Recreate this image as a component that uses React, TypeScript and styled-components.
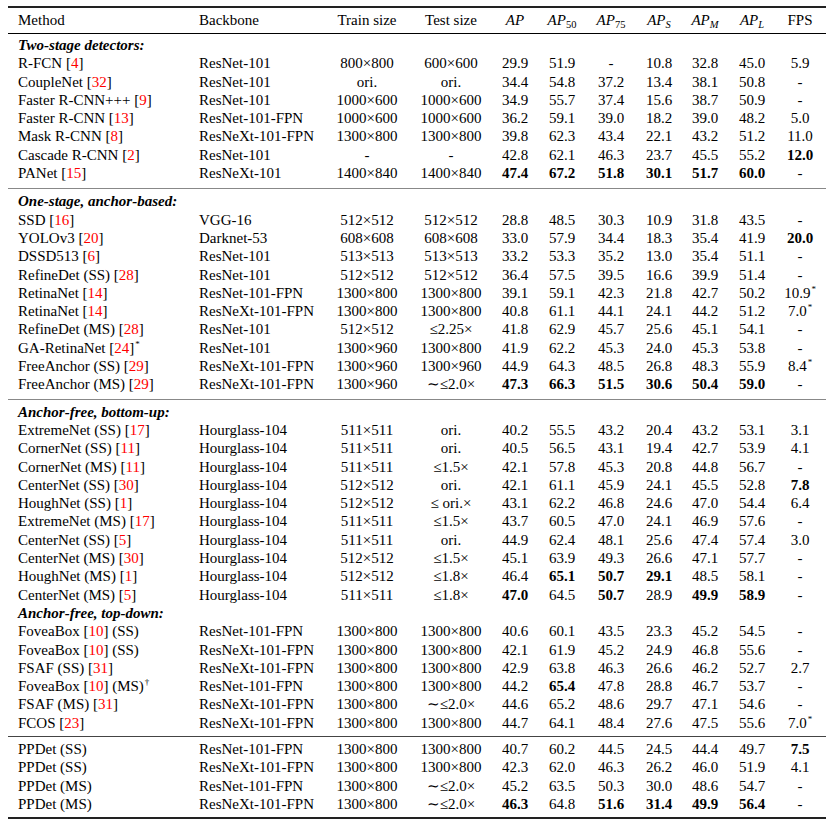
import React from "react";
import styled, { createGlobalStyle } from "styled-components";

const Global = createGlobalStyle`
  html, body { margin: 0; padding: 0; background: #fff; }
  body { font-family: "Liberation Serif", "Times New Roman", serif; color: #000; }
`;

const COLS = "184px 138px 74px 94px 34px 60px 38px 58px 34px 60px 36px 8px";

const Table = styled.div`
  width: 818px;
  margin: 6px 0 0 8px;
  border-top: 2px solid #222;
  border-bottom: 2px solid #222;
  font-size: 15px;
`;

const HeaderRow = styled.div`
  display: grid;
  grid-template-columns: ${COLS};
  height: 25px;
  align-items: center;
  border-bottom: 1px solid #000;
  white-space: nowrap;
`;

const Group = styled.div<{ $rule?: string; $top: number; $bottom: number }>`
  padding-top: ${(p) => p.$top}px;
  padding-bottom: ${(p) => p.$bottom}px;
  border-top: ${(p) => (p.$rule ? `1px solid ${p.$rule}` : "none")};
`;

const Row = styled.div`
  display: grid;
  grid-template-columns: ${COLS};
  height: 18.3px;
  line-height: 18.3px;
  align-items: center;
  white-space: nowrap;
`;

const Title = styled.div`
  grid-column: 1 / -1;
  padding-left: 10px;
  font-weight: bold;
  font-style: italic;
`;

const NameCell = styled.div`
  padding-left: 10px;
`;

const BackboneCell = styled.div`
  padding-left: 7px;
`;

const NumCell = styled.div<{ $bold?: boolean }>`
  display: flex;
  justify-content: center;
  font-weight: ${(p) => (p.$bold ? "bold" : "normal")};
`;

const Cite = styled.span`
  color: #f00;
`;

const Sup = styled.sup`
  font-size: 9px;
  line-height: 0;
  vertical-align: 6px;
  margin-left: 1px;
`;

const MathAP = styled.span`
  font-style: italic;
`;

const Sub = styled.sub<{ $italic?: boolean }>`
  font-size: 10.5px;
  line-height: 0;
  vertical-align: -3px;
  font-style: ${(p) => (p.$italic ? "italic" : "normal")};
`;

type Section = { title?: string; rows: string[][] };

const renderName = (s: string) => {
  const parts = s.split(/(\[\d+\]|\^[*†])/).filter((x) => x !== "");
  return parts.map((p, i) => {
    const m = p.match(/^\[(\d+)\]$/);
    if (m)
      return (
        <React.Fragment key={i}>
          [<Cite>{m[1]}</Cite>]
        </React.Fragment>
      );
    if (p.startsWith("^")) return <Sup key={i}>{p.slice(1)}</Sup>;
    return <React.Fragment key={i}>{p}</React.Fragment>;
  });
};

const renderNum = (s: string, key: number) => {
  const bold = s.startsWith("!");
  let t = bold ? s.slice(1) : s;
  let sup: string | null = null;
  if (t.endsWith("^*")) {
    sup = "*";
    t = t.slice(0, -2);
  }
  return (
    <NumCell key={key} $bold={bold}>
      <span>
        {t}
        {sup && <Sup>{sup}</Sup>}
      </span>
    </NumCell>
  );
};

const g1: Section[] = [
  {
    title: "Two-stage detectors:",
    rows: [
      ["R-FCN [4]", "ResNet-101", "800×800", "600×600", "29.9", "51.9", "-", "10.8", "32.8", "45.0", "5.9"],
      ["CoupleNet [32]", "ResNet-101", "ori.", "ori.", "34.4", "54.8", "37.2", "13.4", "38.1", "50.8", "-"],
      ["Faster R-CNN+++ [9]", "ResNet-101", "1000×600", "1000×600", "34.9", "55.7", "37.4", "15.6", "38.7", "50.9", "-"],
      ["Faster R-CNN [13]", "ResNet-101-FPN", "1000×600", "1000×600", "36.2", "59.1", "39.0", "18.2", "39.0", "48.2", "5.0"],
      ["Mask R-CNN [8]", "ResNeXt-101-FPN", "1300×800", "1300×800", "39.8", "62.3", "43.4", "22.1", "43.2", "51.2", "11.0"],
      ["Cascade R-CNN [2]", "ResNet-101", "-", "-", "42.8", "62.1", "46.3", "23.7", "45.5", "55.2", "!12.0"],
      ["PANet [15]", "ResNeXt-101", "1400×840", "1400×840", "!47.4", "!67.2", "!51.8", "!30.1", "!51.7", "!60.0", "-"],
    ],
  },
];

const g2: Section[] = [
  {
    title: "One-stage, anchor-based:",
    rows: [
      ["SSD [16]", "VGG-16", "512×512", "512×512", "28.8", "48.5", "30.3", "10.9", "31.8", "43.5", "-"],
      ["YOLOv3 [20]", "Darknet-53", "608×608", "608×608", "33.0", "57.9", "34.4", "18.3", "35.4", "41.9", "!20.0"],
      ["DSSD513 [6]", "ResNet-101", "513×513", "513×513", "33.2", "53.3", "35.2", "13.0", "35.4", "51.1", "-"],
      ["RefineDet (SS) [28]", "ResNet-101", "512×512", "512×512", "36.4", "57.5", "39.5", "16.6", "39.9", "51.4", "-"],
      ["RetinaNet [14]", "ResNet-101-FPN", "1300×800", "1300×800", "39.1", "59.1", "42.3", "21.8", "42.7", "50.2", "10.9^*"],
      ["RetinaNet [14]", "ResNeXt-101-FPN", "1300×800", "1300×800", "40.8", "61.1", "44.1", "24.1", "44.2", "51.2", "7.0^*"],
      ["RefineDet (MS) [28]", "ResNet-101", "512×512", "≤2.25×", "41.8", "62.9", "45.7", "25.6", "45.1", "54.1", "-"],
      ["GA-RetinaNet [24]^*", "ResNet-101", "1300×960", "1300×800", "41.9", "62.2", "45.3", "24.0", "45.3", "53.8", "-"],
      ["FreeAnchor (SS) [29]", "ResNeXt-101-FPN", "1300×960", "1300×960", "44.9", "64.3", "48.5", "26.8", "48.3", "55.9", "8.4^*"],
      ["FreeAnchor (MS) [29]", "ResNeXt-101-FPN", "1300×960", "∼≤2.0×", "!47.3", "!66.3", "!51.5", "!30.6", "!50.4", "!59.0", "-"],
    ],
  },
];

const g3: Section[] = [
  {
    title: "Anchor-free, bottom-up:",
    rows: [
      ["ExtremeNet (SS) [17]", "Hourglass-104", "511×511", "ori.", "40.2", "55.5", "43.2", "20.4", "43.2", "53.1", "3.1"],
      ["CornerNet (SS) [11]", "Hourglass-104", "511×511", "ori.", "40.5", "56.5", "43.1", "19.4", "42.7", "53.9", "4.1"],
      ["CornerNet (MS) [11]", "Hourglass-104", "511×511", "≤1.5×", "42.1", "57.8", "45.3", "20.8", "44.8", "56.7", "-"],
      ["CenterNet (SS) [30]", "Hourglass-104", "512×512", "ori.", "42.1", "61.1", "45.9", "24.1", "45.5", "52.8", "!7.8"],
      ["HoughNet (SS) [1]", "Hourglass-104", "512×512", "≤ ori.×", "43.1", "62.2", "46.8", "24.6", "47.0", "54.4", "6.4"],
      ["ExtremeNet (MS) [17]", "Hourglass-104", "511×511", "≤1.5×", "43.7", "60.5", "47.0", "24.1", "46.9", "57.6", "-"],
      ["CenterNet (SS) [5]", "Hourglass-104", "511×511", "ori.", "44.9", "62.4", "48.1", "25.6", "47.4", "57.4", "3.0"],
      ["CenterNet (MS) [30]", "Hourglass-104", "512×512", "≤1.5×", "45.1", "63.9", "49.3", "26.6", "47.1", "57.7", "-"],
      ["HoughNet (MS) [1]", "Hourglass-104", "512×512", "≤1.8×", "46.4", "!65.1", "!50.7", "!29.1", "48.5", "58.1", "-"],
      ["CenterNet (MS) [5]", "Hourglass-104", "511×511", "≤1.8×", "!47.0", "64.5", "!50.7", "28.9", "!49.9", "!58.9", "-"],
    ],
  },
  {
    title: "Anchor-free, top-down:",
    rows: [
      ["FoveaBox [10] (SS)", "ResNet-101-FPN", "1300×800", "1300×800", "40.6", "60.1", "43.5", "23.3", "45.2", "54.5", "-"],
      ["FoveaBox [10] (SS)", "ResNeXt-101-FPN", "1300×800", "1300×800", "42.1", "61.9", "45.2", "24.9", "46.8", "55.6", "-"],
      ["FSAF (SS) [31]", "ResNeXt-101-FPN", "1300×800", "1300×800", "42.9", "63.8", "46.3", "26.6", "46.2", "52.7", "2.7"],
      ["FoveaBox [10] (MS)^†", "ResNet-101-FPN", "1300×800", "1300×800", "44.2", "!65.4", "47.8", "28.8", "46.7", "53.7", "-"],
      ["FSAF (MS) [31]", "ResNeXt-101-FPN", "1300×800", "∼≤2.0×", "44.6", "65.2", "48.6", "29.7", "47.1", "54.6", "-"],
      ["FCOS [23]", "ResNeXt-101-FPN", "1300×800", "1300×800", "44.7", "64.1", "48.4", "27.6", "47.5", "55.6", "7.0^*"],
    ],
  },
];

const g4: Section[] = [
  {
    rows: [
      ["PPDet (SS)", "ResNet-101-FPN", "1300×800", "1300×800", "40.7", "60.2", "44.5", "24.5", "44.4", "49.7", "!7.5"],
      ["PPDet (SS)", "ResNeXt-101-FPN", "1300×800", "1300×800", "42.3", "62.0", "46.3", "26.2", "46.0", "51.9", "4.1"],
      ["PPDet (MS)", "ResNet-101-FPN", "1300×800", "∼≤2.0×", "45.2", "63.5", "50.3", "30.0", "48.6", "54.7", "-"],
      ["PPDet (MS)", "ResNeXt-101-FPN", "1300×800", "∼≤2.0×", "!46.3", "64.8", "!51.6", "!31.4", "!49.9", "!56.4", "-"],
    ],
  },
];

const renderSections = (sections: Section[]) =>
  sections.map((sec, si) => (
    <React.Fragment key={si}>
      {sec.title && (
        <Row>
          <Title>{sec.title}</Title>
        </Row>
      )}
      {sec.rows.map((r, ri) => (
        <Row key={ri}>
          <NameCell>{renderName(r[0])}</NameCell>
          <BackboneCell>{r[1]}</BackboneCell>
          {r.slice(2).map((c, ci) => renderNum(c, ci))}
        </Row>
      ))}
    </React.Fragment>
  ));

const HeadCell = styled.div`
  display: flex;
  justify-content: center;
`;

const APHead = ({ sub, italic }: { sub?: string; italic?: boolean }) => (
  <HeadCell>
    <span>
      <MathAP>AP</MathAP>
      {sub && <Sub $italic={italic}>{sub}</Sub>}
    </span>
  </HeadCell>
);

export default function App() {
  return (
    <>
      <Global />
      <Table>
        <HeaderRow>
          <NameCell>Method</NameCell>
          <BackboneCell>Backbone</BackboneCell>
          <HeadCell>Train size</HeadCell>
          <HeadCell>Test size</HeadCell>
          <APHead />
          <APHead sub="50" />
          <APHead sub="75" />
          <APHead sub="S" italic />
          <APHead sub="M" italic />
          <APHead sub="L" italic />
          <HeadCell>FPS</HeadCell>
        </HeaderRow>
        <Group $top={2} $bottom={6}>
          {renderSections(g1)}
        </Group>
        <Group $rule="#888" $top={3} $bottom={5}>
          {renderSections(g2)}
        </Group>
        <Group $rule="#888" $top={3} $bottom={4}>
          {renderSections(g3)}
        </Group>
        <Group $rule="#444" $top={3} $bottom={4}>
          {renderSections(g4)}
        </Group>
      </Table>
    </>
  );
}
